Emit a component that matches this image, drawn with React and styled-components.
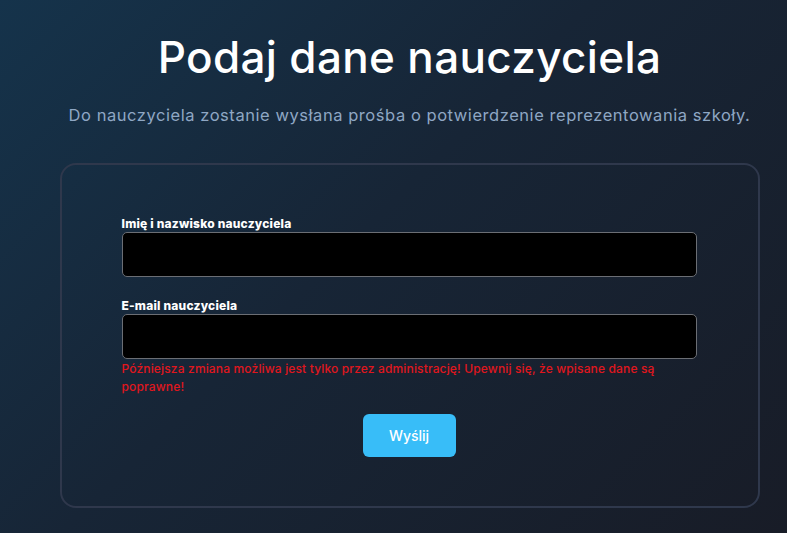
import React from "react";
import styled, { createGlobalStyle } from "styled-components";

const GlobalStyle = createGlobalStyle`
  html, body {
    margin: 0;
    padding: 0;
  }
  body {
    font-family: "Inter", "Noto Sans", sans-serif;
    background: linear-gradient(135deg, #15334b 0%, #172536 45%, #181c27 100%);
    min-height: 100vh;
  }
`;

const Page = styled.main`
  min-height: 100vh;
  display: flex;
  flex-direction: column;
  align-items: center;
  padding: 31px 0 0 32px;
  box-sizing: border-box;
`;

const Title = styled.h1`
  margin: 0;
  font-size: 44px;
  line-height: 52px;
  font-weight: 500;
  color: #ffffff;
  letter-spacing: 0.35px;
`;

const Subtitle = styled.p`
  margin: 21px 0 0;
  font-size: 16.5px;
  line-height: 22px;
  letter-spacing: 0.55px;
  color: #8fa7c4;
`;

const Card = styled.form`
  margin-top: 37px;
  width: 700px;
  box-sizing: border-box;
  border: 2px solid #2f384c;
  border-radius: 16px;
  padding: 51px 61px 49px 60px;
  display: flex;
  flex-direction: column;
`;

const Field = styled.div`
  display: flex;
  flex-direction: column;
  margin-bottom: ${(p) => p.$gap || 0}px;
`;

const Label = styled.label`
  font-size: 12px;
  line-height: 16px;
  font-weight: 800;
  letter-spacing: 0.2px;
  color: #ffffff;
`;

const Input = styled.input`
  height: 45px;
  box-sizing: border-box;
  background: #000000;
  border: 1px solid #6b6e74;
  border-radius: 5px;
  color: #fff;
  padding: 0 10px;
  font-family: inherit;
  font-size: 14px;
  outline: none;
`;

const Warning = styled.p`
  margin: 1px 0 0;
  font-size: 12px;
  line-height: 18px;
  font-weight: 500;
  letter-spacing: 0.15px;
  color: #e0161d;
`;

const Submit = styled.button`
  align-self: center;
  margin-top: 18px;
  width: 93px;
  height: 43px;
  border: none;
  border-radius: 6px;
  background: #38bdf8;
  color: #ffffff;
  font-family: inherit;
  font-size: 14px;
  font-weight: 500;
  cursor: pointer;
`;

export default function App() {
  return (
    <>
      <GlobalStyle />
      <Page>
        <Title>Podaj dane nauczyciela</Title>
        <Subtitle>
          Do nauczyciela zostanie wysłana prośba o potwierdzenie reprezentowania szkoły.
        </Subtitle>
        <Card onSubmit={(e) => e.preventDefault()}>
          <Field $gap={21}>
            <Label htmlFor="name">Imię i nazwisko nauczyciela</Label>
            <Input id="name" type="text" />
          </Field>
          <Field>
            <Label htmlFor="email">E-mail nauczyciela</Label>
            <Input id="email" type="email" />
            <Warning>
              Późniejsza zmiana możliwa jest tylko przez administrację! Upewnij się, że wpisane dane są
              poprawne!
            </Warning>
          </Field>
          <Submit type="submit">Wyślij</Submit>
        </Card>
      </Page>
    </>
  );
}
